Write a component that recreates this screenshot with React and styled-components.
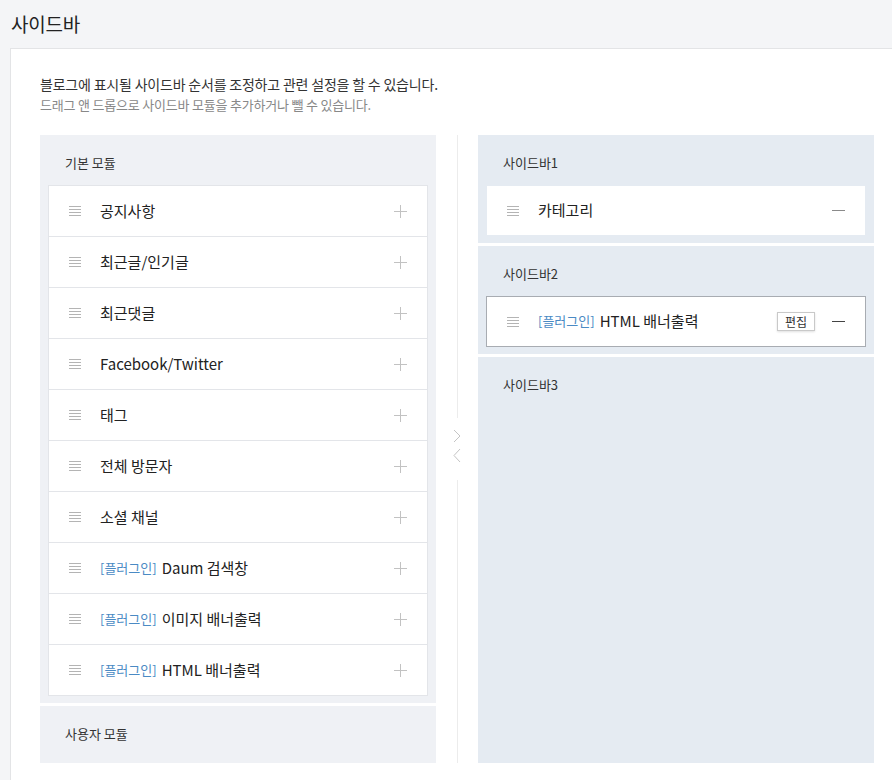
import React from "react";
import styled, { createGlobalStyle } from "styled-components";

const GlobalStyle = createGlobalStyle`
  * { box-sizing: border-box; }
  html, body { margin: 0; padding: 0; }
  body {
    background: #f4f5f7;
    font-family: "Noto Sans CJK KR", "Noto Sans", sans-serif;
    color: #222;
    overflow: hidden;
    width: 892px;
  }
`;

const Page = styled.div`
  width: 892px;
  min-height: 780px;
`;

const Title = styled.h2`
  margin: 0;
  height: 48px;
  line-height: 48px;
  padding-left: 11px;
  font-size: 19px;
  font-weight: 400;
  color: #222;
  letter-spacing: -0.2px;
`;

const Card = styled.div`
  margin-left: 10px;
  width: 900px;
  background: #fff;
  border: 1px solid #e3e4e6;
  border-right: none;
  padding: 24px 0 30px 29px;
`;

const Desc = styled.p`
  margin: 0;
  font-size: 14px;
  line-height: 22px;
  color: #333;
  letter-spacing: -0.2px;
`;

const SubDesc = styled.p`
  margin: 0 0 20px;
  font-size: 13px;
  line-height: 20px;
  color: #888;
  letter-spacing: -0.2px;
`;

const Columns = styled.div`
  display: flex;
  align-items: stretch;
`;

const Column = styled.div`
  width: 396px;
  display: flex;
  flex-direction: column;
  gap: 3px;
`;

const Section = styled.div`
  background: ${(p) => (p.$tone === "blue" ? "#e5ebf2" : "#eff1f5")};
  padding-bottom: 7px;
  ${(p) => (p.$fill ? "flex: 1;" : "")}
`;

const SectionHeader = styled.div`
  height: 50px;
  padding: 4px 25px 0;
  display: flex;
  align-items: center;
  font-size: 13px;
  color: #333;
`;

const List = styled.div`
  margin: 0 8px;
  border: 1px solid #e3e5e9;
  background: #fff;
`;

const Row = styled.div`
  box-sizing: content-box;
  height: 50px;
  padding: 0 20px;
  display: flex;
  align-items: center;
  background: #fff;
  & + & {
    border-top: 1px solid #e3e5e9;
  }
`;

const Item = styled.div`
  margin: 0 8px;
  height: 51px;
  display: flex;
  align-items: center;
  padding: 0 20px;
  background: #fff;
  border: 1px solid ${(p) => (p.$active ? "#a8acb2" : "transparent")};
  background-clip: padding-box;
`;

const HandleIcon = styled.svg`
  flex: none;
  width: 12px;
  height: 10px;
  margin-right: 19px;
`;

const Label = styled.div`
  flex: 1;
  display: flex;
  align-items: center;
  font-size: 15px;
  line-height: 20px;
  padding-bottom: 1px;
  color: #222;
`;

const Tag = styled.span`
  font-size: 13px;
  color: #4a8ac4;
  margin-right: 5px;
`;

const EditButton = styled.button`
  width: 38px;
  height: 19px;
  padding: 0;
  margin-right: 17px;
  border: 1px solid #c9c9c9;
  background: #fff;
  box-shadow: 0 1px 2px rgba(0, 0, 0, 0.12);
  font-family: inherit;
  font-size: 12px;
  line-height: 17px;
  color: #333;
  cursor: pointer;
`;

const SignIcon = styled.svg`
  flex: none;
  width: 13px;
  height: 13px;
`;

const Separator = styled.div`
  width: 42px;
  display: flex;
  flex-direction: column;
  align-items: center;
`;

const SepLine = styled.div`
  flex: 1;
  width: 1px;
  background: #ececec;
`;

const Arrows = styled.svg`
  flex: none;
  width: 10px;
  height: 62px;
`;

const Handle = () => (
  <HandleIcon viewBox="0 0 12 10">
    {[0.5, 3.5, 6.5, 9.5].map((y) => (
      <line key={y} x1="0" y1={y} x2="12" y2={y} stroke="#b4b4b4" strokeWidth="1" />
    ))}
  </HandleIcon>
);

const Plus = () => (
  <SignIcon viewBox="0 0 13 13">
    <line x1="0" y1="6.5" x2="13" y2="6.5" stroke="#c2c2c2" strokeWidth="1" />
    <line x1="6.5" y1="0" x2="6.5" y2="13" stroke="#c2c2c2" strokeWidth="1" />
  </SignIcon>
);

const Minus = ({ dark }) => (
  <SignIcon viewBox="0 0 13 13">
    <line x1="0" y1="6.5" x2="13" y2="6.5" stroke={dark ? "#444" : "#8a8a8a"} strokeWidth="1" />
  </SignIcon>
);

const modules = [
  { name: "공지사항" },
  { name: "최근글/인기글" },
  { name: "최근댓글" },
  { name: "Facebook/Twitter" },
  { name: "태그" },
  { name: "전체 방문자" },
  { name: "소셜 채널" },
  { name: "Daum 검색창", plugin: true },
  { name: "이미지 배너출력", plugin: true },
  { name: "HTML 배너출력", plugin: true },
];

export default function App() {
  return (
    <Page>
      <GlobalStyle />
      <Title>사이드바</Title>
      <Card>
        <Desc>블로그에 표시될 사이드바 순서를 조정하고 관련 설정을 할 수 있습니다.</Desc>
        <SubDesc>드래그 앤 드롭으로 사이드바 모듈을 추가하거나 뺄 수 있습니다.</SubDesc>
        <Columns>
          <Column>
            <Section>
              <SectionHeader>기본 모듈</SectionHeader>
              <List>
                {modules.map((m) => (
                  <Row key={m.name}>
                    <Handle />
                    <Label>
                      {m.plugin && <Tag>[플러그인]</Tag>}
                      {m.name}
                    </Label>
                    <Plus />
                  </Row>
                ))}
              </List>
            </Section>
            <Section>
              <SectionHeader>사용자 모듈</SectionHeader>
            </Section>
          </Column>
          <Separator>
            <SepLine />
            <Arrows viewBox="0 0 10 62">
              <polyline points="2,12 8,18 2,24" fill="none" stroke="#c4c4c4" strokeWidth="1" />
              <polyline points="8,31 2,37.5 8,44" fill="none" stroke="#c4c4c4" strokeWidth="1" />
            </Arrows>
            <SepLine />
          </Separator>
          <Column>
            <Section $tone="blue">
              <SectionHeader>사이드바1</SectionHeader>
              <Item>
                <Handle />
                <Label>카테고리</Label>
                <Minus />
              </Item>
            </Section>
            <Section $tone="blue">
              <SectionHeader>사이드바2</SectionHeader>
              <Item $active>
                <Handle />
                <Label>
                  <Tag>[플러그인]</Tag>
                  HTML 배너출력
                </Label>
                <EditButton>편집</EditButton>
                <Minus dark />
              </Item>
            </Section>
            <Section $tone="blue" $fill>
              <SectionHeader>사이드바3</SectionHeader>
            </Section>
          </Column>
        </Columns>
      </Card>
    </Page>
  );
}
